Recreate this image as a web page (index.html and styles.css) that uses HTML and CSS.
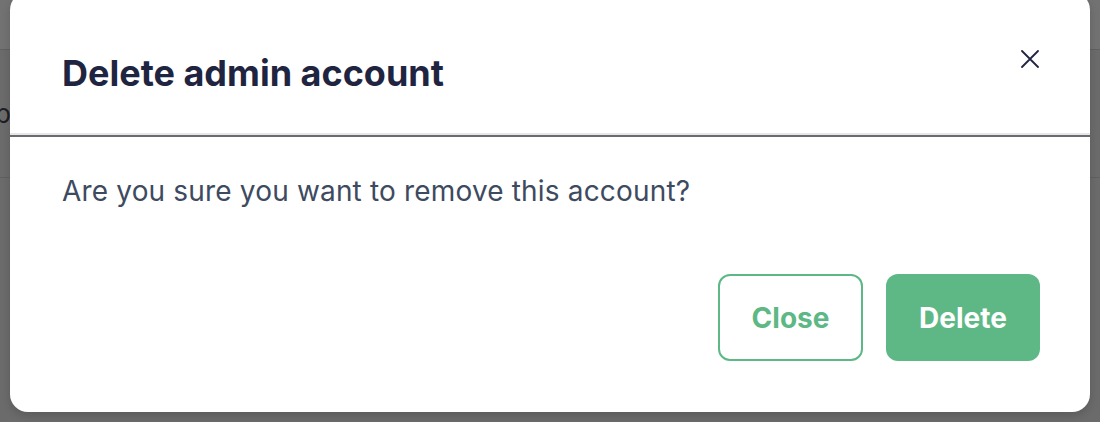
FILE: index.html
```html
<!DOCTYPE html>
<html lang="en">
<head>
<meta charset="utf-8">
<title>Delete admin account</title>
<link rel="stylesheet" href="styles.css">
</head>
<body>
<div class="page">
  <div class="page-top"></div>
  <div class="page-row"><span class="page-text">b</span></div>
  <div class="page-rest"></div>
</div>
<div class="overlay">
  <div class="modal" role="dialog" aria-labelledby="modal-title">
    <div class="modal-header">
      <h2 id="modal-title" class="modal-title">Delete admin account</h2>
      <button class="modal-close" aria-label="Close">
        <svg width="18" height="18" viewBox="0 0 18 18" fill="none" stroke="#1f2540" stroke-width="1.8" stroke-linecap="round"><path d="M1 1L17 17M17 1L1 17"/></svg>
      </button>
    </div>
    <div class="modal-body">
      <p class="modal-text">Are you sure you want to remove this account?</p>
      <div class="modal-actions">
        <button class="btn btn-outline">Close</button>
        <button class="btn btn-primary">Delete</button>
      </div>
    </div>
  </div>
</div>
</body>
</html>
```
FILE: styles.css
```css
* { box-sizing: border-box; }
html, body { margin: 0; padding: 0; }
body {
  width: 1100px;
  height: 422px;
  overflow: hidden;
  font-family: Inter, "Noto Sans", sans-serif;
  background: #6b6b6b;
}
.page { display: flex; flex-direction: column; height: 422px; }
.page-top { height: 50px; background: #727272; border-bottom: 1px solid #606060; }
.page-row { height: 128px; display: flex; align-items: center; border-bottom: 1px solid #606060; }
.page-text { font-size: 26px; color: #1e1e24; margin-left: -5px; margin-top: 0; }
.page-rest { flex: 1; }
.overlay {
  position: fixed;
  inset: 0;
}
.modal {
  position: absolute;
  left: 10px;
  top: -8px;
  width: 1080px;
  height: 420px;
  display: flex;
  flex-direction: column;
  box-shadow: 0 4px 8px rgba(0,0,0,0.15);
  border-radius: 18px;
}
.modal-header {
  background: #fff;
  height: 143px;
  border-radius: 18px 18px 0 0;
  border-bottom: 2px solid #e3e6ea;
  display: flex;
  align-items: flex-start;
  justify-content: space-between;
  padding: 0 52px;
}
.modal-title {
  margin: 59px 0 0 0;
  font-size: 36px;
  line-height: 44px;
  font-weight: 700;
  color: #1f2540;
}
.modal-close {
  background: none;
  border: none;
  padding: 0;
  margin: 58px -1px 0 0;
  width: 18px;
  height: 18px;
  display: flex;
  cursor: pointer;
}
.modal-body {
  margin-top: 2px;
  background: #fff;
  flex: 1;
  border-radius: 0 0 18px 18px;
  padding: 35px 50px 0 52px;
  display: flex;
  flex-direction: column;
}
.modal-text {
  margin: 0;
  font-size: 28px;
  line-height: 38px;
  color: #3e4a5f;
  letter-spacing: 0.17px;
}
.modal-actions {
  margin-top: 64px;
  display: flex;
  justify-content: flex-end;
  gap: 23px;
}
.btn {
  height: 87px;
  border-radius: 12px;
  font-family: Inter, "Noto Sans", sans-serif;
  font-size: 28px;
  font-weight: 700;
  padding-top: 2px;
  cursor: pointer;
}
.btn-outline {
  width: 145px;
  background: #fff;
  border: 2px solid #5eb886;
  color: #5eb886;
}
.btn-primary {
  width: 154px;
  background: #5eb886;
  border: none;
  color: #fff;
}
```
